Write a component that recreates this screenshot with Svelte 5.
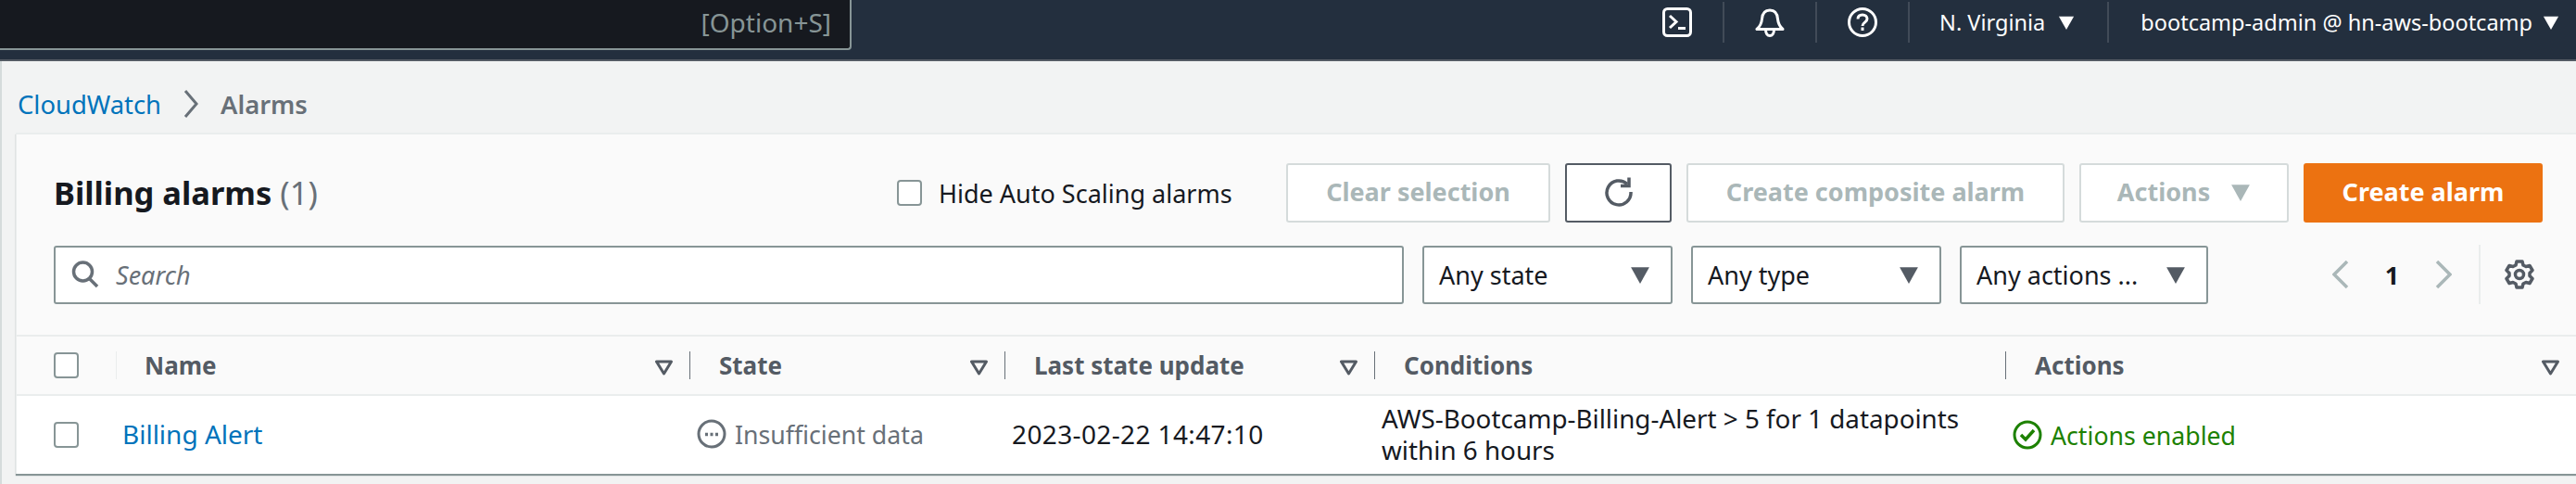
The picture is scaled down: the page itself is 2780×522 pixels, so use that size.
<script>
  const columns = [
    { label: "State", width: 340 },
    { label: "Last state update", width: 399 },
    { label: "Conditions", width: 681 },
  ];
  const filters = [
    { label: "Any state", cls: "f-state" },
    { label: "Any type", cls: "f-type" },
    { label: "Any actions ...", cls: "f-actions" },
  ];
</script>

{#snippet caret(size = 21)}
  <svg class="caret" width={size} height={size} viewBox="0 0 20 20"><path d="M1 3h18L10 19z" fill="currentColor" /></svg>
{/snippet}

{#snippet sortIcon()}
  <svg class="sort" width="21" height="17" viewBox="0 0 21 17"><path d="M2.5 2h16L10.500 15z" fill="none" stroke="currentColor" stroke-width="3" stroke-linejoin="round" /></svg>
{/snippet}

<div class="page">
  <header class="topbar">
    <div class="search-box"><span>[Option+S]</span></div>
    <nav class="nav">
      <div class="nav-icon">
        <svg width="32" height="32" viewBox="0 0 32 32" fill="none" stroke="#fff" stroke-width="3">
          <rect x="1.500" y="1.500" width="29" height="29" rx="4" />
          <path d="M8 9l7 6.500-7 6.500" />
          <path d="M17 22.500h8" />
        </svg>
      </div>
      <div class="nav-icon">
        <svg width="32" height="32" viewBox="0 0 32 32" fill="none" stroke="#fff" stroke-width="3" stroke-linejoin="round">
          <path d="M2 23.500h28c-3.500-3-5-5.500-5.500-11C24 6 20.500 3 16 3S8 6 7.500 12.500C7 18 5.500 20.500 2 23.500z" />
          <path d="M11.500 24c0 4 2 6.500 4.500 6.500s4.500-2.500 4.500-6.500" />
        </svg>
      </div>
      <div class="nav-icon">
        <svg width="32" height="32" viewBox="0 0 32 32" fill="none" stroke="#fff" stroke-width="3">
          <circle cx="16" cy="16" r="14.500" />
          <path d="M11 12.500c0-3 2.200-4.500 5-4.500s5 1.700 5 4.300c0 4-5 3.700-5 7.700" />
          <path d="M16 21.500v3.500" />
        </svg>
      </div>
      <div class="nav-text region">N. Virginia {@render caret(18)}</div>
      <div class="nav-text account">bootcamp-admin @ hn-aws-bootcamp {@render caret(18)}</div>
    </nav>
  </header>

  <div class="content">
    <div class="breadcrumb">
      <a href="#top">CloudWatch</a>
      <svg width="16" height="30" viewBox="0 0 16 30" fill="none" stroke="#687078" stroke-width="3"><path d="M2 1l12 14L2 29" /></svg>
      <span>Alarms</span>
    </div>

    <section class="card">
      <div class="card-head">
        <div class="row-one">
          <h1>Billing alarms <span>(1)</span></h1>
          <label class="hide-scaling"><span class="checkbox"></span>Hide Auto Scaling alarms</label>
          <div class="buttons">
            <button class="btn disabled clear">Clear selection</button>
            <button class="btn refresh" aria-label="Refresh">
              <svg width="32" height="32" viewBox="0 0 32 32" fill="none" stroke="#545b64" stroke-width="3.500">
                <path d="M25 7.500A13 13 0 1 0 29 16" />
                <path d="M18 9.500h9v-9" />
              </svg>
            </button>
            <button class="btn disabled composite">Create composite alarm</button>
            <button class="btn disabled actions">Actions {@render caret(22)}</button>
            <button class="btn primary">Create alarm</button>
          </div>
        </div>
        <div class="row-two">
          <div class="search">
            <svg width="30" height="30" viewBox="0 0 30 30" fill="none" stroke="#687078" stroke-width="3.500">
              <circle cx="12.500" cy="12" r="10" />
              <path d="M19.500 19.500L28 28" />
            </svg>
            <span>Search</span>
          </div>
          {#each filters as f}
            <div class="select {f.cls}"><span>{f.label}</span>{@render caret(22)}</div>
          {/each}
          <div class="pager">
            <svg width="18" height="30" viewBox="0 0 18 30" fill="none" stroke="#aab7b8" stroke-width="3.500"><path d="M16 1L2 15l14 14" /></svg>
            <b>1</b>
            <svg width="18" height="30" viewBox="0 0 18 30" fill="none" stroke="#aab7b8" stroke-width="3.500"><path d="M2 1l14 14L2 29" /></svg>
          </div>
          <div class="prefs">
            <svg width="32" height="32" viewBox="0 0 32 32" fill="none" stroke="#545b64" stroke-width="3.500" stroke-linejoin="round">
              <circle cx="16" cy="16" r="4.500" />
              <path d="M13 2h6l1 4 3 1.500 4-1 3 5-3 3v3l3 3-3 5-4-1-3 1.500-1 4h-6l-1-4L9 24.500l-4 1-3-5 3-3v-3l-3-3 3-5 4 1L12 6z" />
            </svg>
          </div>
        </div>
      </div>

      <div class="thead">
        <div class="cell check"><span class="checkbox"></span></div>
        <div class="th name"><span>Name</span>{@render sortIcon()}</div>
        {#each columns as col}
          <div class="th" style="width: {col.width}px">
            <span>{col.label}</span>
            {#if col.label !== "Conditions"}{@render sortIcon()}{/if}
          </div>
        {/each}
        <div class="th last"><span>Actions</span>{@render sortIcon()}</div>
      </div>

      <div class="tbody">
        <div class="cell check"><span class="checkbox"></span></div>
        <div class="td name"><a href="#top">Billing Alert</a></div>
        <div class="td state">
          <svg width="32" height="32" viewBox="0 0 32 32" fill="none" stroke="#687078" stroke-width="3">
            <circle cx="16" cy="16" r="14" />
            <path d="M9 16.500h3M14.500 16.500h3M20 16.500h3" stroke-width="3.500" />
          </svg>
          Insufficient data
        </div>
        <div class="td updated">2023-02-22 14:47:10</div>
        <div class="td conditions">AWS-Bootcamp-Billing-Alert &gt; 5 for 1 datapoints<br />within 6 hours</div>
        <div class="td enabled">
          <svg width="32" height="32" viewBox="0 0 32 32" fill="none" stroke="#1d8102" stroke-width="3">
            <circle cx="16" cy="16" r="14" />
            <path d="M9 16l5 5 9-10" stroke-width="3.500" />
          </svg>
          Actions enabled
        </div>
      </div>
    </section>
  </div>
</div>

<style>
  :global(body) {
    margin: 0;
    background: #f2f3f3;
  }

  .page {
    width: 2780px;
    height: 522px;
    overflow: hidden;
    font-family: "Noto Sans", "Open Sans", sans-serif;
    font-size: 28px;
    color: #16191f;
  }

  /* Top navigation */
  .topbar {
    display: flex;
    justify-content: space-between;
    box-sizing: border-box;
    height: 66px;
    background: #232f3e;
    border-bottom: 2px solid #545b64;
  }

  .search-box {
    box-sizing: border-box;
    width: 919px;
    height: 54px;
    padding: 5px 20px 0 0;
    text-align: right;
    font-size: 28px;
    color: #879596;
    background: #16191f;
    border-right: 2px solid #879596;
    border-bottom: 2px solid #879596;
    border-bottom-right-radius: 4px;
  }

  .nav {
    display: flex;
    align-items: flex-start;
    padding-top: 2px;
    padding-right: 18px;
  }

  .nav-icon,
  .nav-text {
    display: flex;
    align-items: center;
    box-sizing: border-box;
    height: 44px;
    color: #fff;
    border-left: 2px solid #414b58;
  }

  .nav-icon {
    justify-content: center;
    width: 100px;
  }

  .nav-icon:first-child {
    width: 98px;
    border-left: 0;
  }

  .nav-text {
    gap: 11px;
    font-size: 23.500px;
    white-space: nowrap;
  }

  .region {
    gap: 14px;
    padding: 0 35px 0 32px;
  }

  .account {
    padding-left: 34px;
  }

  .caret {
    flex-shrink: 0;
  }

  /* Page content */
  .content {
    box-sizing: border-box;
    height: 456px;
    padding-left: 17px;
    border-left: 2px solid #d5dbdb;
  }

  .breadcrumb {
    display: flex;
    align-items: center;
    gap: 24px;
    box-sizing: border-box;
    height: 77px;
    padding-top: 15px;
    font-size: 27.400px;
    font-weight: 600;
    color: #687078;
  }

  .breadcrumb a {
    color: #0073bb;
    font-weight: 400;
    text-decoration: none;
  }

  .card {
    box-sizing: border-box;
    margin-left: -2px;
    background: #fafafa;
    border-top: 2px solid #eaeded;
    border-left: 1px solid #eaeded;
    box-shadow: 0 2px 1px #879596;
  }

  .card-head {
    padding: 31px 36px 33px 40px;
    border-bottom: 2px solid #eaeded;
  }

  .row-one,
  .row-two {
    display: flex;
    align-items: center;
  }

  .row-one {
    height: 64px;
    margin-bottom: 24px;
  }

  .row-two {
    padding-right: 9px;
  }

  h1 {
    flex: 1;
    margin: 0 0 2px;
    font-size: 34.500px;
    font-weight: 700;
  }

  h1 span {
    font-weight: 400;
    color: #687078;
  }

  .hide-scaling {
    display: flex;
    align-items: center;
    gap: 18px;
    width: 420px;
    font-size: 27px;
    white-space: nowrap;
  }

  .checkbox {
    display: block;
    box-sizing: border-box;
    width: 27px;
    height: 28px;
    background: #fff;
    border: 2px solid #879596;
    border-radius: 4px;
  }

  .buttons {
    display: flex;
    gap: 16px;
  }

  .btn {
    display: flex;
    align-items: center;
    justify-content: center;
    gap: 22px;
    box-sizing: border-box;
    height: 64px;
    padding: 0 0 3px;
    font-family: inherit;
    font-size: 27px;
    font-weight: 700;
    background: #fff;
    border: 2px solid #545b64;
    border-radius: 3px;
  }

  .btn.disabled {
    color: #aab7b8;
    border-color: #d5dbdb;
  }

  .clear {
    width: 285px;
  }

  .refresh {
    width: 115px;
  }

  .composite {
    width: 408px;
  }

  .actions {
    width: 226px;
  }

  .primary {
    width: 258px;
    color: #fff;
    background: #ec7211;
    border-color: #ec7211;
  }

  .search {
    display: flex;
    align-items: center;
    gap: 18px;
    box-sizing: border-box;
    flex: 1;
    height: 63px;
    padding-left: 17px;
    font-size: 27px;
    font-style: italic;
    color: #687078;
    background: #fff;
    border: 2px solid #879596;
    border-radius: 3px;
  }

  .select {
    display: flex;
    align-items: center;
    justify-content: space-between;
    box-sizing: border-box;
    height: 63px;
    padding: 0 22px 0 16px;
    margin-left: 20px;
    font-size: 27px;
    color: #16191f;
    background: #fff;
    border: 2px solid #879596;
    border-radius: 3px;
    white-space: nowrap;
  }

  .select .caret {
    color: #545b64;
  }

  .f-state,
  .f-type {
    width: 270px;
  }

  .f-actions {
    width: 268px;
  }

  .pager {
    display: flex;
    align-items: center;
    justify-content: space-between;
    width: 129px;
    margin-left: 134px;
    margin-right: 29px;
    font-size: 27px;
  }

  .prefs {
    display: flex;
    align-items: center;
    height: 64px;
    padding-left: 26px;
    border-left: 2px solid #eaeded;
  }

  /* Table */
  .thead,
  .tbody {
    display: flex;
    align-items: center;
  }

  .thead {
    height: 62px;
    border-bottom: 2px solid #eaeded;
  }

  .tbody {
    height: 84px;
    background: #fff;
  }

  .check {
    display: flex;
    box-sizing: border-box;
    width: 108px;
    padding-left: 40px;
  }

  .thead .check {
    align-items: center;
    height: 30px;
    border-right: 1px solid #eaeded;
  }

  .th {
    display: flex;
    align-items: center;
    justify-content: space-between;
    box-sizing: border-box;
    height: 30px;
    padding: 0 17px 0 31px;
    font-size: 26px;
    font-weight: 700;
    color: #545b64;
    border-right: 1px solid #687078;
  }

  .th.name {
    width: 619px;
    padding-left: 30px;
  }

  .th.last {
    flex: 1;
    border-right: 0;
  }

  .sort {
    color: #545b64;
    margin-top: 4px;
  }

  .td {
    display: flex;
    align-items: center;
    box-sizing: border-box;
    padding-left: 7px;
    font-size: 26.700px;
    white-space: nowrap;
  }

  .td.name {
    width: 619px;
    padding-left: 6px;
    padding-bottom: 2px;
    font-size: 28px;
  }

  .td a {
    color: #0073bb;
    text-decoration: none;
  }

  .state {
    gap: 9px;
    width: 340px;
    padding-bottom: 2px;
    color: #687078;
  }

  .updated {
    width: 399px;
    padding-bottom: 2px;
    font-size: 28px;
    letter-spacing: 0.370px;
  }

  .conditions {
    display: block;
    width: 681px;
    padding-bottom: 3px;
    font-size: 27.800px;
    line-height: 34px;
  }

  .enabled {
    gap: 9px;
    color: #1d8102;
  }
</style>
